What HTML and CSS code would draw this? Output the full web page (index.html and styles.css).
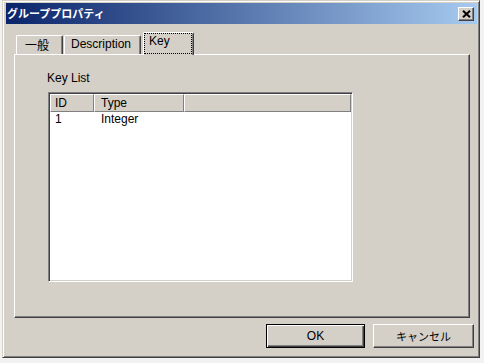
FILE: index.html
```html
<!DOCTYPE html>
<html lang="ja">
<head>
<meta charset="utf-8">
<title>グループプロパティ</title>
<link rel="stylesheet" href="styles.css">
</head>
<body>
<div class="window">
  <div class="titlebar">
    <span class="title">グループプロパティ</span>
    <span class="close">
      <svg width="9" height="8" viewBox="0 0 9 8"><path d="M1 0.8 L8 7.2 M8 0.8 L1 7.2" stroke="#000" stroke-width="2.1" fill="none"/></svg>
    </span>
  </div>
  <div class="tabs">
    <div class="tab tab-general">一般</div>
    <div class="tab tab-desc">Description</div>
    <div class="tab tab-key active"><span class="focus">Key</span></div>
  </div>
  <div class="panel">
    <div class="label">Key List</div>
    <div class="list">
      <div class="header">
        <div class="hcell c1">ID</div>
        <div class="hcell c2">Type</div>
        <div class="hcell c3"></div>
      </div>
      <div class="row">
        <div class="cell c1">1</div>
        <div class="cell c2">Integer</div>
      </div>
    </div>
  </div>
  <div class="buttons">
    <div class="btn btn-default"><span class="btn-inner">OK</span></div>
    <div class="btn btn-cancel"><span class="jp">キャンセル</span></div>
  </div>
</div>
</body>
</html>
```
FILE: styles.css
```css
* { box-sizing: border-box; }
body {
  margin: 0;
  background: #f2f2f2;
  font-family: "Liberation Sans", "Noto Sans CJK JP", sans-serif;
  font-size: 12px;
  color: #000;
}
.window {
  margin-left: 2px;
  width: 478px;
  height: 358px;
  background: #d4d0c8;
  border: 1px solid;
  border-color: #d4d0c8 #404040 #404040 #d4d0c8;
  box-shadow: inset 1px 1px #fff, inset -1px -1px #808080;
  padding: 2px 2px 2px 3px;
  display: flex;
  flex-direction: column;
}
.titlebar {
  height: 21px;
  flex: none;
  background: linear-gradient(to right, #0a246a, #a6caf0);
  display: flex;
  align-items: center;
  justify-content: space-between;
  padding: 0 3px 0 1px;
}
.title {
  color: #fff;
  font-weight: bold;
  font-family: "Noto Sans CJK JP", sans-serif;
  font-size: 11px;
  line-height: 1;
}
.close {
  width: 16px;
  height: 14px;
  background: #d4d0c8;
  border: 1px solid;
  border-color: #fff #404040 #404040 #fff;
  box-shadow: inset -1px -1px #808080;
  display: flex;
  align-items: center;
  justify-content: center;
}
.close svg { display: block; }
.tabs {
  display: flex;
  align-items: flex-end;
  height: 22px;
  flex: none;
  margin-top: 8px;
  padding-left: 10px;
  position: relative;
  z-index: 1;
}
.tab {
  height: 19px;
  background: #d4d0c8;
  border-left: 1px solid #fff;
  border-top: 1px solid #fff;
  border-right: 1px solid #404040;
  box-shadow: inset -1px 0 #808080;
  border-radius: 2px 2px 0 0;
  padding-top: 1px;
  line-height: 14px;
  white-space: nowrap;
}
.tab-general {
  width: 47px;
  padding-left: 8px;
  margin-right: 1px;
  font-family: "Noto Sans CJK JP", sans-serif;
  line-height: 15px;
}
.tab-desc {
  width: 77px;
  padding-left: 6px;
  margin-right: 2px;
}
.tab-key {
  width: 51px;
  height: 23px;
  margin-bottom: -1px;
  padding: 0 1px 1px 0;
}
.focus {
  display: block;
  height: 21px;
  border: 1px dotted #000;
  padding-left: 4px;
  line-height: 14px;
}
.panel {
  margin-left: 8px;
  width: 456px;
  height: 264px;
  flex: none;
  border: 1px solid;
  border-color: #fff #404040 #404040 #fff;
  box-shadow: inset -1px -1px #808080;
  padding: 16px 0 0 32px;
}
.label {
  line-height: 14px;
}
.list {
  margin: 7px 0 0 1px;
  width: 305px;
  height: 190px;
  background: #fff;
  border: 1px solid;
  border-color: #808080 #fff #fff #808080;
  box-shadow: inset 1px 1px #404040, inset -1px -1px #d4d0c8;
  padding: 1px;
}
.header {
  display: flex;
  height: 18px;
}
.hcell {
  background: #d4d0c8;
  border: 1px solid;
  border-color: #fff #808080 #808080 #fff;
  line-height: 14px;
  padding-top: 1px;
}
.hcell.c1 { width: 44px; padding-left: 4px; }
.hcell.c2 { width: 90px; padding-left: 6px; }
.hcell.c3 { flex: 1; }
.row {
  display: flex;
  line-height: 14px;
}
.cell.c1 { width: 44px; padding-left: 5px; }
.cell.c2 { padding-left: 7px; }
.buttons {
  display: flex;
  justify-content: flex-end;
  gap: 8px;
  margin-top: 6px;
  padding-right: 3px;
}
.btn {
  height: 24px;
  background: #d4d0c8;
  display: flex;
  align-items: center;
  justify-content: center;
  line-height: 14px;
}
.btn-default {
  width: 99px;
  border: 1px solid #000;
  box-shadow: inset 1px 1px #fff, inset -1px -1px #404040, inset -2px -2px #808080;
}
.btn-cancel {
  width: 101px;
  border: 1px solid;
  border-color: #fff #404040 #404040 #fff;
  box-shadow: inset -1px -1px #808080;
}
.jp {
  font-family: "Noto Sans CJK JP", sans-serif;
  font-size: 11px;
}
```
